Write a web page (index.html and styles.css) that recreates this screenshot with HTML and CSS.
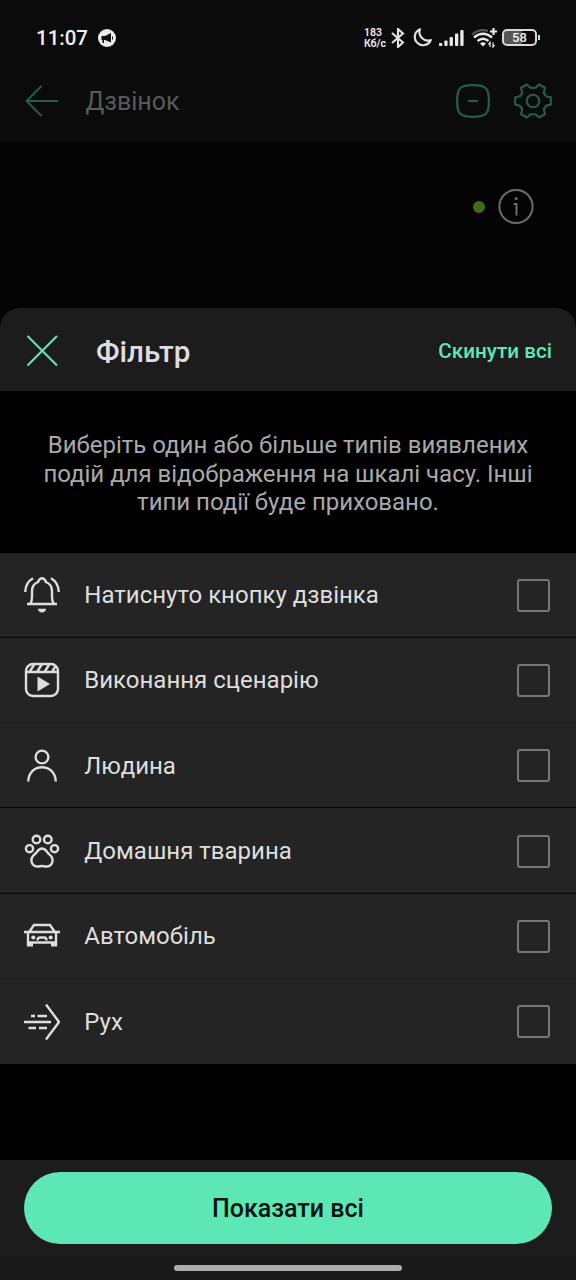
FILE: index.html
```html
<!DOCTYPE html>
<html lang="uk">
<head>
<meta charset="utf-8">
<title>Фільтр</title>
<link rel="stylesheet" href="styles.css">
</head>
<body>
<div class="screen">
  <div class="status">
    <span class="clock">11:07</span>
    <svg class="notice" width="18" height="18" viewBox="0 0 18 18"><circle cx="9" cy="9" r="9" fill="#ececec"/><path d="M3.500 7H7l6-3v9.500L7 11H6v3H4.500v-3h-1z" fill="#111"/><path d="M14.500 7.500v3" stroke="#111"/></svg>
    <span class="speed"><span>183</span><span>Кб/с</span></span>
    <svg class="bt" width="14" height="20" viewBox="0 0 14 20" fill="none" stroke="#e2e2e2" stroke-width="2.100"><path d="M1 5l11 9.500L7 19V1l5 4.500L1 15"/></svg>
    <svg class="moon" width="19" height="19" viewBox="0 0 19 19" fill="none" stroke="#e2e2e2" stroke-width="2.100" stroke-linejoin="round"><path d="M7 1.200A8.300 8.300 0 1 0 17.800 12C11 14.500 4.500 8 7 1.200z"/></svg>
    <svg class="signal" width="25" height="16" viewBox="0 0 25 16" fill="#e8e8e8"><rect y="13" width="3.300" height="3" rx="1"/><rect x="5.300" y="10.500" width="3.300" height="5.500" rx="1"/><rect x="10.600" y="7" width="3.300" height="9" rx="1"/><rect x="16" y="3.500" width="3.300" height="12.500" rx="1"/><rect x="21.300" width="3.300" height="16" rx="1"/></svg>
    <svg class="wifi" width="27" height="20" viewBox="0 0 27 20" fill="none" stroke-width="2.300"><path d="M1 6.500Q8 .5 17 2.800" stroke="#555"/><path d="M3 9.500q9-7.500 18 0M6.500 13q5.500-4.500 11 0" stroke="#e8e8e8"/><path d="M9 15.500q3-2.300 6 0l-3 3z" fill="#e8e8e8"/><path d="M22.500 0v7M19 3.500h7" stroke="#e8e8e8" stroke-width="2.200"/><path d="M19 19v-4.500l-1.500 2M22 14.500V19l1.500-2" stroke="#ddd" stroke-width="1.300"/></svg>
    <span class="battery"><span class="cell">58</span><span class="tip"></span></span>
  </div>
  <header class="appbar">
    <svg width="34" height="34" viewBox="0 0 34 34" fill="none" stroke="#255d4b" stroke-width="2"><path d="M34 17H2.500M17.500 2L2.500 17l15 15"/></svg>
    <h1 class="page-title">Дзвінок</h1>
    <svg class="minus" width="34" height="34" viewBox="0 0 34 34" fill="none" stroke="#255d4b" stroke-width="2.200"><path d="M17 1.100C30 1.100 32.900 4 32.900 17S30 32.900 17 32.900 1.100 30 1.100 17 4 1.100 17 1.100z"/><path d="M12 17h10"/></svg>
    <svg class="gear" width="38" height="36" viewBox="0 0 38 36" fill="none" stroke="#255d4b" stroke-width="2.100" stroke-linejoin="round"><circle cx="19" cy="18" r="6.300"/><path d="M13 1.500l3.500 3.300h5L25 1.500l6 3.200-1.300 5.300 2.800 3.500 4.300.8v7.400l-4.300.8-2.800 3.500L31 31.300l-6 3.200-3.500-3.300h-5L13 34.500l-6-3.200L8.300 26l-2.800-3.500-4.300-.8v-7.400l4.300-.8L8.300 10 7 4.700z"/></svg>
  </header>
  <main class="backdrop">
    <span class="dot"></span>
    <svg width="36" height="36" viewBox="0 0 36 36" fill="none" stroke="#6b6b6b" stroke-width="2"><circle cx="18" cy="17.500" r="16.600"/><path d="M15.500 15H18.500V26.500"/><circle cx="18.200" cy="9.500" r="1.600" fill="#6b6b6b" stroke="none"/></svg>
  </main>
  <section class="sheet">
    <div class="sheet-head">
      <svg width="32" height="32" viewBox="0 0 32 32" fill="none" stroke="#5de7b5" stroke-width="2.100"><path d="M1.500 1l29.500 29.500M31 1L1.500 30.500"/></svg>
      <h2 class="sheet-title">Фільтр</h2>
      <span class="reset">Скинути всі</span>
    </div>
    <p class="hint">Виберіть один або більше типів виявлених<br>подій для відображення на шкалі часу. Інші<br>типи події буде приховано.</p>
    <ul class="list">
      <li class="row"><svg class="icon bell" viewBox="0 0 36 36"><path d="M3 27h30M6.500 26.500Q8 23.500 8 20v-6q0-6.500 6-9Q15.500 1.200 18 1.200T22 5q6 2.500 6 9v6q0 3.500 1.500 6.500M1.200 15Q1.500 5.500 9 1.200M34.800 15Q34.500 5.500 27 1.200"/><path class="solid" d="M13.800 31.800h8.400q-.8 3.700-4.200 3.700t-4.200-3.700z"/></svg><span class="label">Натиснуто кнопку дзвінка</span><span class="box"></span></li>
      <li class="row"><svg class="icon" viewBox="0 0 36 36"><rect x="2" y="2" width="32" height="32" rx="7"/><path d="M2 10h32M5.500 10l5-8M13 10l5-8M20.500 10l5-8M28 10l4-6.500"/><path class="solid" d="M13.500 14.500L26 22l-12.500 7.500z"/></svg><span class="label">Виконання сценарію</span><span class="box"></span></li>
      <li class="row"><svg class="icon" viewBox="0 0 36 36"><circle cx="18" cy="9" r="6.400"/><path d="M4.300 33.500C4.300 14.500 31.700 14.500 31.700 33.500"/></svg><span class="label">Людина</span><span class="box"></span></li>
      <li class="row"><svg class="icon" viewBox="0 0 36 36"><circle cx="12.500" cy="6.500" r="3.800"/><circle cx="23.800" cy="6.500" r="3.800"/><circle cx="5.500" cy="15.700" r="3.600"/><circle cx="30.500" cy="15.700" r="3.600"/><path d="M18 15.500c-4 0-4.500 3.500-7.300 5.800-6 5-3 12.200 3.300 12.200 2 0 2.500-.5 4-.5s2 .5 4 .5c6.300 0 9.300-7.200 3.300-12.200-2.800-2.300-3.300-5.800-7.300-5.800z"/></svg><span class="label">Домашня тварина</span><span class="box"></span></li>
      <li class="row"><svg class="icon" viewBox="0 0 36 36"><path d="M5.500 13.500L10 7h16l4.500 6.500M0 14h36M4 14v14M32 14v14M4 24.500h28"/><path class="solid" d="M3 24h6v4.500H3zM27 24h6v4.500h-6z"/><circle class="solid" cx="9.300" cy="19.500" r="2.100"/><circle class="solid" cx="26.700" cy="19.500" r="2.100"/><path d="M13.500 22.500q0-3 2.500-3h4q2.500 0 2.500 3"/></svg><span class="label">Автомобіль</span><span class="box"></span></li>
      <li class="row"><svg class="icon" viewBox="0 0 36 36"><path d="M0 18h27M7 12h4M13.500 12H23M4.500 24H12M15 24h8M22 .5L35 18 22 35.500"/></svg><span class="label">Рух</span><span class="box"></span></li>
    </ul>
    <footer class="actions"><button class="show-all">Показати всі</button></footer>
    <div class="nav"><span class="handle"></span></div>
  </section>
</div>
</body>
</html>
```
FILE: styles.css
```css
* { box-sizing: border-box; }
body { margin: 0; background: #040404; font-family: Roboto, "Noto Sans", sans-serif; }
h1, h2, p, ul { margin: 0; padding: 0; }
svg { display: block; flex: none; }
.screen { width: 576px; height: 1280px; display: flex; flex-direction: column; overflow: hidden; }
.status { height: 75px; background: #0b0b0b; display: flex; align-items: center; padding: 0 36px; color: #f0f0f0; }
.clock { font-size: 20.500px; font-weight: 500; width: 62px; white-space: nowrap; }
.speed { margin-left: 248px; width: 28px; font-size: 10.500px; line-height: 11px; font-weight: 600; display: flex; flex-direction: column; white-space: nowrap; }
.bt { margin-left: -1px; }
.moon { margin-left: 8px; }
.signal { margin: 1px 0 0 7px; }
.wifi { margin-left: 7px; }
.battery { display: flex; align-items: center; gap: 1px; margin-left: 4px; }
.cell { width: 35px; height: 17px; border: 2px solid #d8d8d8; border-radius: 5px; background: linear-gradient(90deg, #555 58%, transparent 58%); font-size: 13px; line-height: 14px; font-weight: 500; text-align: center; }
.tip { width: 2px; height: 5px; background: #d8d8d8; }
.appbar { height: 67px; background: #0b0b0b; display: flex; align-items: center; padding: 0 24px 15px; }
.page-title { margin-left: 27.500px; font-size: 25px; font-weight: 400; color: #5a5a5a; }
.minus { margin-left: auto; }
.gear { margin-left: 24px; }
.backdrop { height: 166px; display: flex; align-items: center; justify-content: flex-end; gap: 13px; padding: 0 42px 37px 0; }
.dot { width: 12px; height: 12px; border-radius: 50%; background: #45691c; }
.sheet { flex: 1; display: flex; flex-direction: column; border-radius: 20px 20px 0 0; background: #000; overflow: hidden; }
.sheet-head { height: 83px; display: flex; align-items: center; padding: 2px 24px 0 26px; background: #1c1c1c; }
.sheet-title { margin-left: 38px; padding-top: 2px; font-size: 29.600px; font-weight: 500; color: #dedede; }
.reset { margin-left: auto; font-size: 20.700px; font-weight: 500; color: #5de7b5; }
.hint { height: 161.500px; padding-top: 40px; text-align: center; font-size: 24px; line-height: 28.500px; letter-spacing: -.02px; color: #a9a9a9; white-space: nowrap; }
.list { list-style: none; height: 511.500px; background: #242424; }
.row { height: 85.300px; display: flex; align-items: center; padding: 1px 26px 0 24px; border-bottom: 1px solid #080808; }
.row:nth-child(2), .row:nth-child(5) { border-color: #1b1b1b; }
.row:last-child { border-color: transparent; }
.icon { width: 36px; height: 36px; fill: none; stroke: #dedede; stroke-width: 2.400; }
.icon.bell { margin-bottom: 1px; }
.icon .solid { fill: #dedede; stroke: none; }
.label { margin-left: 24.300px; font-size: 24px; color: #dedede; }
.box { margin-left: auto; width: 33px; height: 33px; border: 2px solid #777; border-radius: 3px; }
.actions { margin-top: auto; height: 96px; padding: 12px 24px; background: #1c1c1c; }
.show-all { display: block; width: 100%; height: 72px; border: 0; border-radius: 36px; background: #5de7b5; color: #06120d; font: 500 25px Roboto, sans-serif; }
.nav { height: 24px; background: #191919; display: flex; justify-content: center; align-items: center; }
.handle { width: 228px; height: 6px; border-radius: 3px; background: #adadad; }
```
